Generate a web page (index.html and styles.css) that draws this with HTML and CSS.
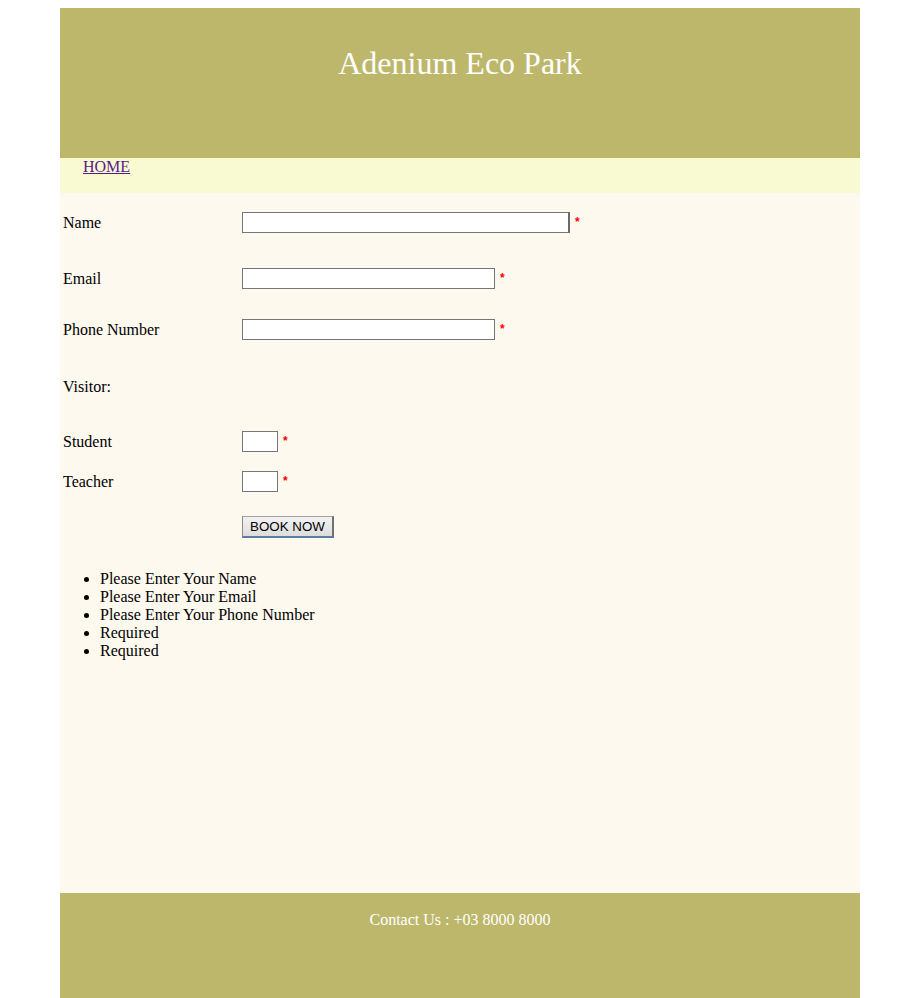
FILE: index.html
```html
<!DOCTYPE html>
<html>
<head>
<meta charset="utf-8">
<title>Adenium Eco Park</title>
<link rel="stylesheet" href="styles.css">
</head>
<body>
<div class="page">
  <header class="header">
    <h1 class="title">Adenium Eco Park</h1>
  </header>
  <nav class="nav">
    <a class="nav-link" href="#">HOME</a>
  </nav>
  <main class="main">
    <form class="form">
      <div class="row row-name">
        <label class="label">Name</label>
        <div class="field"><input class="input input-wide" type="text"><span class="req">*</span></div>
      </div>
      <div class="row row-email">
        <label class="label">Email</label>
        <div class="field"><input class="input input-mid" type="text"><span class="req">*</span></div>
      </div>
      <div class="row row-phone">
        <label class="label">Phone Number</label>
        <div class="field"><input class="input input-mid" type="text"><span class="req">*</span></div>
      </div>
      <div class="row row-visitor">
        <span class="label">Visitor:</span>
      </div>
      <div class="row row-student">
        <label class="label">Student</label>
        <div class="field"><input class="input input-small" type="text"><span class="req">*</span></div>
      </div>
      <div class="row row-teacher">
        <label class="label">Teacher</label>
        <div class="field"><input class="input input-small" type="text"><span class="req">*</span></div>
      </div>
      <div class="row row-button">
        <span class="label"></span>
        <div class="field"><button class="btn" type="button">BOOK NOW</button></div>
      </div>
    </form>
    <ul class="errors">
      <li>Please Enter Your Name</li>
      <li>Please Enter Your Email</li>
      <li>Please Enter Your Phone Number</li>
      <li>Required</li>
      <li>Required</li>
    </ul>
  </main>
  <footer class="footer">
    <p class="contact">Contact Us : +03 8000 8000</p>
  </footer>
</div>
</body>
</html>
```
FILE: styles.css
```css
html, body {
  margin: 0;
  padding: 0;
  background: #ffffff;
}
body {
  font-family: "Liberation Serif", "Times New Roman", serif;
  font-size: 16px;
  color: #000;
}
.page {
  width: 800px;
  margin: 8px 0 0 60px;
  display: flex;
  flex-direction: column;
}
.header {
  background: #bdb76b;
  height: 150px;
  box-sizing: border-box;
  padding-top: 37px;
}
.title {
  margin: 0;
  text-align: center;
  color: #ffffff;
  font-weight: normal;
  font-size: 32px;
  line-height: 37px;
}
.nav {
  background: #fafad2;
  height: 35px;
  box-sizing: border-box;
  padding-left: 23px;
  line-height: 18px;
}
.nav-link {
  color: #551a8b;
  text-decoration: underline;
}
.main {
  background: #fdf9ef;
  height: 700px;
  box-sizing: border-box;
  padding-top: 19px;
}
.form {
  display: flex;
  flex-direction: column;
  padding-left: 3px;
}
.row {
  display: grid;
  grid-template-columns: 179px auto;
  align-items: center;
  height: 21px;
}
.row-email { margin-top: 35px; }
.row-phone { margin-top: 30px; }
.row-visitor { margin-top: 36px; }
.row-student { margin-top: 34px; }
.row-teacher { margin-top: 19px; }
.row-button { margin-top: 24px; height: 22px; }
.label {
  line-height: 18px;
}
.field {
  display: flex;
  align-items: center;
}
.input {
  box-sizing: border-box;
  height: 21px;
  border: 1px solid #767676;
  background: #fff;
  padding: 1px 2px;
  margin: 0;
  font-family: "Liberation Sans", Arial, sans-serif;
  font-size: 13.33px;
}
.input-wide {
  width: 328px;
  border-right: 2px solid #6a6a6a;
}
.input-mid { width: 253px; }
.input-small { width: 36px; }
.req {
  color: #ff0000;
  margin-left: 5px;
  font-family: "Liberation Sans", Arial, sans-serif;
  font-weight: bold;
  font-size: 12px;
  line-height: 12px;
  position: relative;
  top: -1px;
}
.btn {
  box-sizing: border-box;
  width: 92px;
  height: 22px;
  margin: 0;
  padding: 0;
  font-family: "Liberation Sans", Arial, sans-serif;
  font-size: 13.33px;
  color: #000;
  background: linear-gradient(#f2f2f2, #dddddd);
  border-top: 1px solid #a0a0a0;
  border-left: 1px solid #8a8a8a;
  border-right: 2px solid #707070;
  border-bottom: 2px solid #5a7fa0;
}
.errors {
  margin: 32px 0 0;
  padding-left: 40px;
  line-height: 18px;
}
.footer {
  background: #bdb76b;
  height: 120px;
  box-sizing: border-box;
  padding-top: 18px;
}
.contact {
  margin: 0;
  text-align: center;
  color: #ffffff;
  line-height: 18px;
}
```
